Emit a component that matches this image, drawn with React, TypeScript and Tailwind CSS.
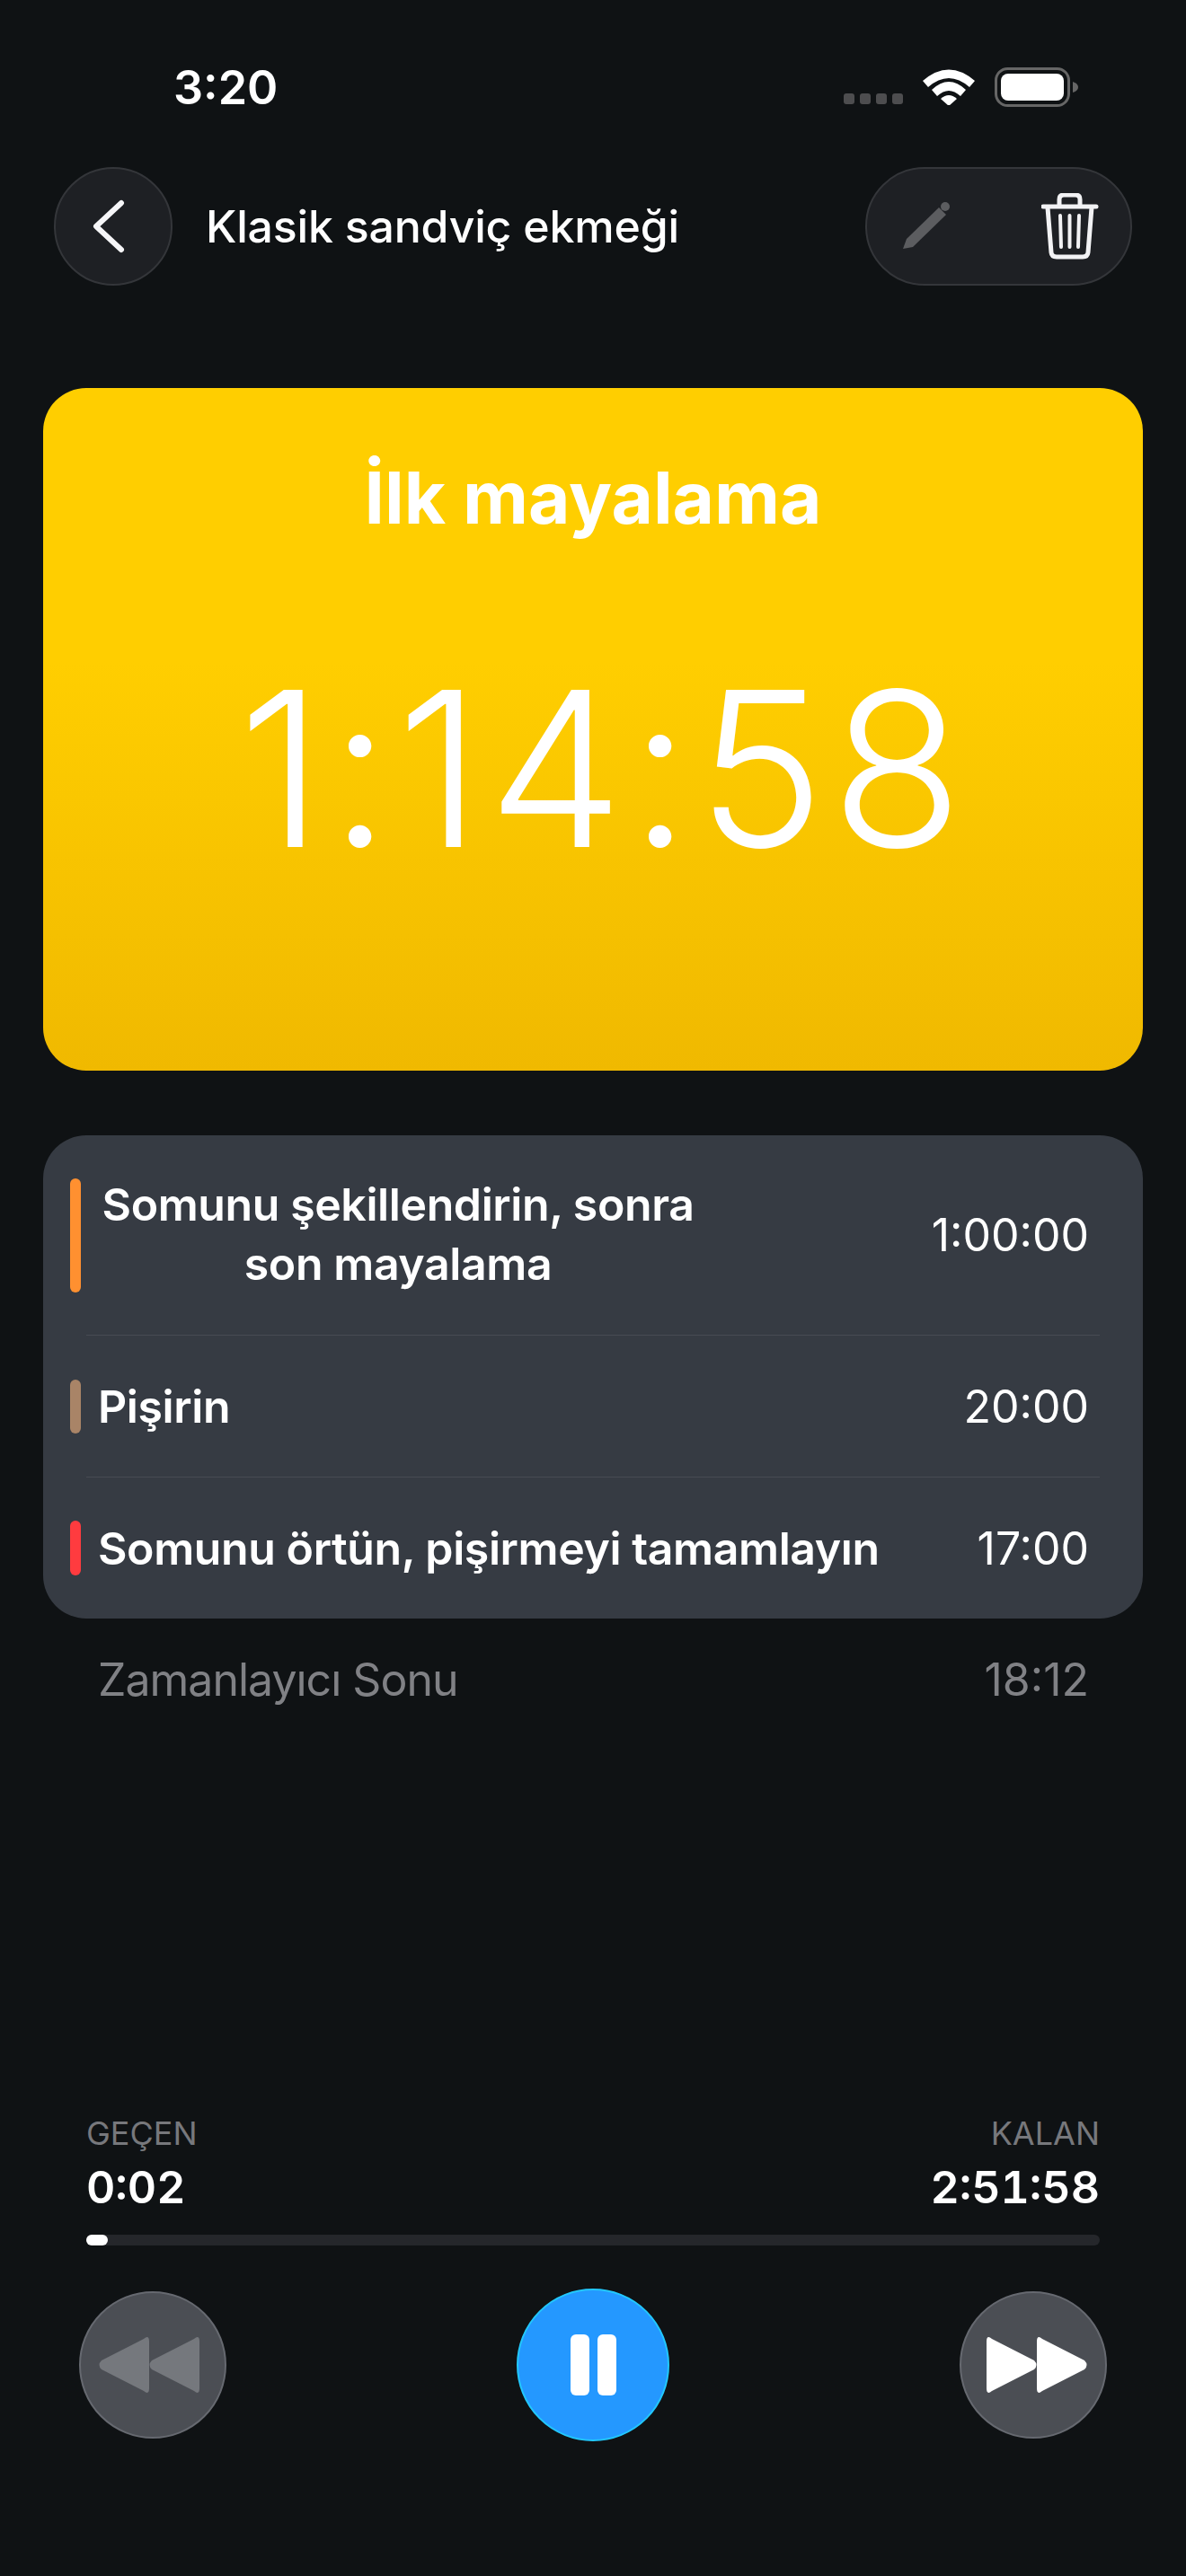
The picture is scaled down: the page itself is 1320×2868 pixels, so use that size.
const Wifi = () => (
  <svg width="58" height="42" viewBox="0 0 58 42" fill="#fff">
    <path d="M0 15 Q29 -10 58 15 L52 22 Q29 2 6 22 Z" />
    <path d="M10 25 Q29 7 48 25 L42 32 Q29 20 16 32 Z" />
    <path d="M20 35 Q29 27 38 35 L29 43 Z" />
  </svg>
);

const Battery = () => (
  <svg width="94" height="44" viewBox="0 0 94 44">
    <rect x="1.500" y="1.500" width="81" height="41" rx="13" fill="none" stroke="#666" strokeWidth="3" />
    <rect x="7" y="7" width="70" height="30" rx="8" fill="#fff" />
    <path d="M87 16 Q93 18 93 22 Q93 26 87 28 Z" fill="#666" />
  </svg>
);

const Pencil = () => (
  <svg width="56" height="56" viewBox="0 0 56 56" fill="#5c5d60">
    <path d="M1 53 L5 42 L41 7 L49 15 L12 51 Z" />
    <circle cx="48" cy="6" r="5" />
  </svg>
);

const Trash = () => (
  <svg width="64" height="74" viewBox="0 0 64 74" fill="none" stroke="#f2f2f4" strokeLinecap="round" strokeLinejoin="round">
    <path d="M2 15 H61" strokeWidth="5" />
    <path d="M7 16 L11 66 Q11.500 71 17 71 H46 Q51.500 71 52 66 L56 16" strokeWidth="5" />
    <path d="M20 14 V7 Q20 2 25 2 H38 Q43 2 43 7 V14" strokeWidth="5" />
    <path d="M21 25 L22 60 M31.500 25 V60 M42 25 L41 60" strokeWidth="4" />
  </svg>
);

const Rewind = ({ color }: { color: string }) => (
  <svg width="112" height="64" viewBox="0 0 112 64" fill={color}>
    <path d="M56 6 Q56 -2 50 3 L3 27 Q-2 32 3 37 L50 61 Q56 66 56 58 Z" />
    <path d="M112 6 Q112 -2 106 3 L59 27 Q54 32 59 37 L106 61 Q112 66 112 58 Z" />
  </svg>
);

export default function App() {
  return (
    <div className="h-[2868px] w-[1320px] bg-[#0f1214] flex flex-col text-white font-['Inter',sans-serif] overflow-hidden">
      {/* Status bar */}
      <div className="h-[186px] shrink-0 flex items-start justify-between pl-[193px] pr-[119px] pt-[69px]">
        <span className="text-[52px] leading-[58px] font-semibold">3:20</span>
        <div className="flex items-start gap-[22px] pt-[6px]">
          <div className="flex gap-[6px] pt-[29px]">
            <span className="size-[12px] rounded-[3px] bg-[#4d4d4f]"></span>
            <span className="size-[12px] rounded-[3px] bg-[#4d4d4f]"></span>
            <span className="size-[12px] rounded-[3px] bg-[#4d4d4f]"></span>
            <span className="size-[12px] rounded-[3px] bg-[#4d4d4f]"></span>
          </div>
          <Wifi />
          <Battery />
        </div>
      </div>

      {/* Header */}
      <div className="h-[132px] shrink-0 flex items-center px-[60px]">
        <div className="size-[132px] rounded-full bg-[#1e2024] border-2 border-[#34363a] flex items-center justify-center">
          <svg className="mr-[10px]" width="36" height="60" viewBox="0 0 36 60" fill="none" stroke="#f6f6f8" strokeWidth="6" strokeLinecap="round" strokeLinejoin="round">
            <path d="M32 4 L4 30 L32 56" />
          </svg>
        </div>
        <h1 className="ml-[37px] text-[50px] leading-[60px] font-[550] tracking-[-0.2px] flex-1">Klasik sandviç ekmeği</h1>
        <div className="w-[297px] h-[132px] rounded-full bg-[#1e2024] border-2 border-[#34363a] flex items-center justify-between pl-[39px] pr-[35px]">
          <Pencil />
          <Trash />
        </div>
      </div>

      {/* Timer card */}
      <div className="mt-[114px] mx-[48px] h-[760px] shrink-0 rounded-[48px] bg-gradient-to-b from-[#ffce00] from-40% to-[#f0b900] flex flex-col items-center">
        <div className="mt-[76px] text-[80px] leading-[92px] font-bold">İlk mayalama</div>
        <div className="mt-[111px] ml-[24px] text-[240px] leading-[290px] font-[350] tracking-[7px]">1:14:58</div>
      </div>

      {/* Steps */}
      <div className="mt-[72px] mx-[48px] rounded-[48px] bg-[#363b43] shrink-0 pl-[30px] pr-[48px]">
        <div className="h-[222px] flex items-start">
          <span className="mt-[48px] w-[12px] h-[127px] rounded-full bg-[#ff9030] shrink-0"></span>
          <div className="w-[706px] mt-[44px] text-center text-[50px] leading-[66px] font-semibold tracking-[-0.4px]">
            Somunu şekillendirin, sonra<br />son mayalama
          </div>
          <span className="ml-auto self-center mr-[12px] text-[50px] leading-[60px]">1:00:00</span>
        </div>
        <div className="ml-[18px] h-px bg-[#474b53]"></div>
        <div className="h-[157px] flex items-center">
          <span className="w-[12px] h-[60px] rounded-full bg-[#a98467] shrink-0"></span>
          <span className="ml-[19px] text-[50px] leading-[60px] font-semibold tracking-[-0.4px]">Pişirin</span>
          <span className="ml-auto mr-[12px] text-[50px] leading-[60px]">20:00</span>
        </div>
        <div className="ml-[18px] h-px bg-[#474b53]"></div>
        <div className="h-[157px] flex items-center">
          <span className="w-[12px] h-[61px] rounded-full bg-[#ff3b3f] shrink-0"></span>
          <span className="ml-[19px] text-[50px] leading-[60px] font-semibold tracking-[-0.4px]">Somunu örtün, pişirmeyi tamamlayın</span>
          <span className="ml-auto mr-[12px] text-[50px] leading-[60px]">17:00</span>
        </div>
      </div>

      <div className="mt-[38px] ml-[109px] mr-[108px] flex justify-between text-[50px] leading-[60px] text-[#808185]">
        <span className="tracking-[-1px]">Zamanlayıcı Sonu</span>
        <span>18:12</span>
      </div>

      {/* Playback */}
      <div className="mt-auto px-[96px] flex justify-between">
        <div>
          <div className="text-[36px] leading-[44px] text-[#77787c]">GEÇEN</div>
          <div className="mt-[8px] text-[50px] leading-[60px] font-semibold tabular-nums">0:02</div>
        </div>
        <div className="text-right">
          <div className="text-[36px] leading-[44px] text-[#77787c]">KALAN</div>
          <div className="mt-[8px] text-[50px] leading-[60px] font-semibold tabular-nums">2:51:58</div>
        </div>
      </div>
      <div className="mt-[23px] mx-[96px] h-[12px] rounded-full bg-[#25272b]">
        <div className="w-[24px] h-[12px] rounded-full bg-white"></div>
      </div>
      <div className="mt-[48px] mb-[150px] px-[88px] flex items-center justify-between">
        <div className="size-[164px] rounded-full bg-[#4b4e54] border-2 border-[#666970] flex items-center justify-center">
          <div className="mr-[8px] flex"><Rewind color="#75787d" /></div>
        </div>
        <div className="size-[170px] rounded-full bg-[#2498ff] border-2 border-[#22c8ff] flex items-center justify-center gap-[9px]">
          <span className="w-[21px] h-[68px] rounded-[6px] bg-white"></span>
          <span className="w-[21px] h-[68px] rounded-[6px] bg-white"></span>
        </div>
        <div className="size-[164px] rounded-full bg-[#4b4e54] border-2 border-[#666970] flex items-center justify-center">
          <div className="ml-[8px] rotate-180 flex"><Rewind color="#ffffff" /></div>
        </div>
      </div>
    </div>
  );
}
